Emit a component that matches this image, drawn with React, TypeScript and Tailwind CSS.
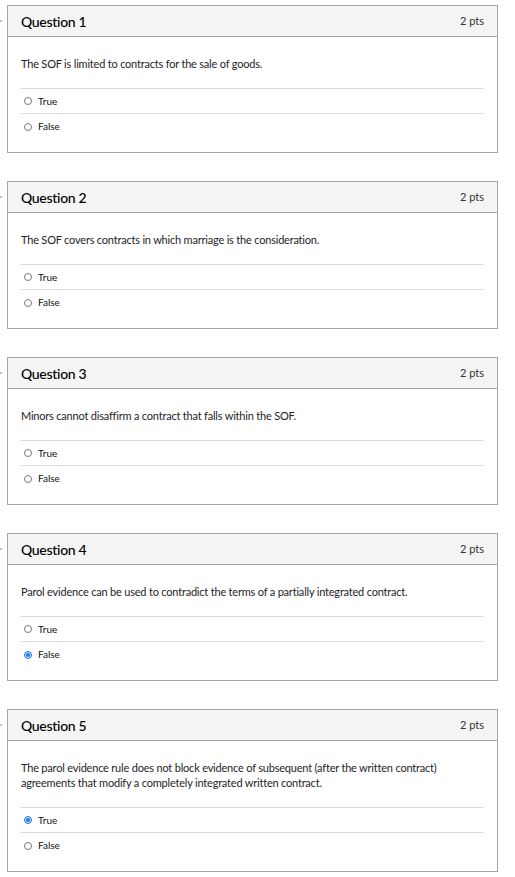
import React from "react";

type Q = { n: number; text: string[]; checked: "True" | "False" | null; dot: string };

const questions: Q[] = [
  { n: 1, text: ["The SOF is limited to contracts for the sale of goods."], checked: null, dot: "#c9a35f" },
  { n: 2, text: ["The SOF covers contracts in which marriage is the consideration."], checked: null, dot: "#c9a35f" },
  { n: 3, text: ["Minors cannot disaffirm a contract that falls within the SOF."], checked: null, dot: "#c9a35f" },
  { n: 4, text: ["Parol evidence can be used to contradict the terms of a partially integrated contract."], checked: "False", dot: "#c9a35f" },
  {
    n: 5,
    text: [
      "The parol evidence rule does not block evidence of subsequent (after the written contract)",
      "agreements that modify a completely integrated written contract.",
    ],
    checked: "True",
    dot: "#9fb3c8",
  },
];

function Radio({ on }: { on: boolean }) {
  if (on) {
    return (
      <span className="flex h-[8px] w-[8px] items-center justify-center rounded-full border border-[#1a73e8] bg-[#cfe3fb]">
        <span className="h-[4px] w-[4px] rounded-full bg-[#1a7cf0]" />
      </span>
    );
  }
  return <span className="block h-[8px] w-[8px] rounded-full border border-[#7a7a7a] bg-white" />;
}

function Card({ q }: { q: Q }) {
  return (
    <div className="relative">
      <span
        className="absolute left-[-7px] top-[15px] h-[2px] w-[2px] rounded-full"
        style={{ backgroundColor: q.dot }}
      />
      <div className="border border-[#a5a5a5] bg-white">
        <div className="flex h-[31px] items-center justify-between border-b border-[#a5a5a5] bg-[#f5f5f5] pl-[13px] pr-[13px]">
          <span className="text-[14px] font-medium tracking-[-0.3px] text-[#000]">Question {q.n}</span>
          <span className="text-[11px] text-[#333]">2 pts</span>
        </div>
        <div className="px-[13px] pb-[13px] pt-[19px]">
          <div className="text-[11px] leading-[15px] tracking-[-0.2px] text-[#1f2328]">
            {q.text.map((t, i) => (
              <div key={i}>{t}</div>
            ))}
          </div>
          <div className="mt-[17px] border-t border-[#dcdcdc]">
            {(["True", "False"] as const).map((a, i) => (
              <div
                key={a}
                className={`flex h-[25px] items-center gap-[6px] pl-[3px] ${i === 0 ? "border-b border-[#dcdcdc]" : ""}`}
              >
                <Radio on={q.checked === a} />
                <span className="text-[10px] text-[#111]">{a}</span>
              </div>
            ))}
          </div>
        </div>
      </div>
    </div>
  );
}

export default function App() {
  return (
    <div
      className="min-h-[877px] w-[515px] bg-white pl-[7px] pr-[17px] pt-[5px]"
      style={{ fontFamily: "Lato, 'Noto Sans', sans-serif" }}
    >
      <div className="flex flex-col gap-[28px]">
        {questions.map((q) => (
          <Card key={q.n} q={q} />
        ))}
      </div>
    </div>
  );
}
